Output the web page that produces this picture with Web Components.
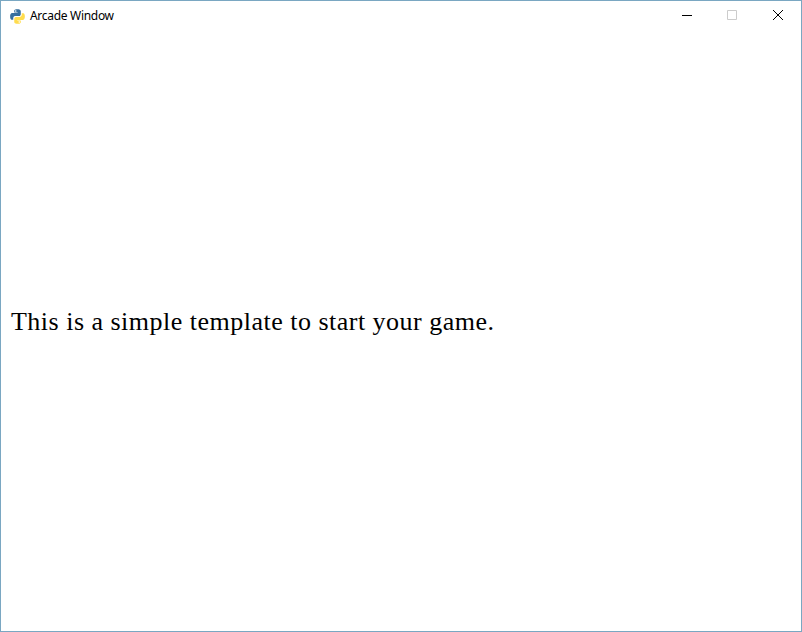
<!DOCTYPE html>
<html lang="en"><head><meta charset="utf-8"><title>Arcade Window</title>
<style>html,body{margin:0;height:100%;overflow:hidden;background:#fff}</style></head><body>
<app-window><title-bar slot="title">Arcade Window</title-bar><game-view>This is a simple template to start your game.</game-view></app-window>
<script>
const define=(name,html)=>customElements.define(name,class extends HTMLElement{constructor(){super();this.attachShadow({mode:'open'}).innerHTML=html;}});
define('app-window',`<style>:host{display:flex;flex-direction:column;box-sizing:border-box;width:802px;height:632px;border:1px solid #7aa7c2;background:#fff}</style><slot name="title"></slot><slot></slot>`);
define('python-logo',`<style>:host{display:block;width:15px;height:15px}svg{display:block}</style><svg width="15" height="15" viewBox="0 0 110 110"><path fill="#366e9e" d="M54 1C29 1 31 13 31 13v13h25v4H19S1 27 1 55s15 24 15 24h8V67s0-15 15-15h26s14 0 14-14V16S81 1 54 1zM42 9a6 6 0 1 1 0 12 6 6 0 0 1 0-12z"/><path fill="#ffdc4e" d="M56 109c25 0 23-12 23-12V84H54v-4h37s18 3 18-25-15-24-15-24h-8v12s0 15-15 15H45s-14 0-14 14v22s-2 15 25 15zm12-8a6 6 0 1 1 0-12 6 6 0 0 1 0 12z"/></svg>`);
define('window-controls',`<style>:host{display:grid;grid-template-columns:45px 46px 45px;height:30px;margin-left:auto}svg{display:block;width:100%;height:30px}</style>
<svg viewBox="0 0 45 30"><path d="M17 14.5h10" stroke="#000"/></svg><svg viewBox="0 0 46 30"><path d="M17.5 9.5h9v9h-9z" fill="none" stroke="#ccc"/></svg><svg viewBox="0 0 45 30"><path d="M17 9l10 10M27 9L17 19" stroke="#000"/></svg>`);
define('title-bar',`<style>:host{display:flex;align-items:center;height:30px;padding-left:9px;font:12px "Noto Sans","Open Sans",sans-serif;color:#000}.t{margin-left:5px;letter-spacing:-.3px;line-height:30px}</style><python-logo></python-logo><span class="t"><slot></slot></span><window-controls></window-controls>`);
define('game-view',`<style>:host{display:flex;flex:1;align-items:center;padding:0 0 18px 10px;font:26px "Liberation Serif",serif;letter-spacing:.49px;white-space:nowrap;color:#000}</style><span><slot></slot></span>`);
</script></body></html>
